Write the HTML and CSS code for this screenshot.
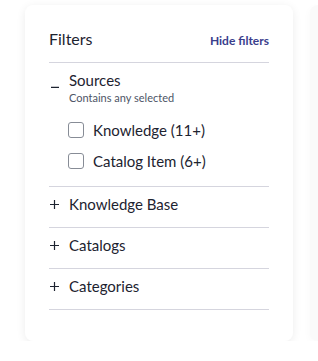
FILE: index.html
```html
<!DOCTYPE html>
<html>

<head>
  <title>Filters</title>
  <link rel="stylesheet" href="styles.css">
</head>

<body>
  <div class="layout">
    <div class="filter-card">
      <div class="filter-header">
        <span class="filter-title">Filters</span>
        <a class="hide-link">Hide filters</a>
      </div>

      <div class="filter-section open">
        <div class="section-head">
          <span class="toggle-icon">
            <svg width="9" height="12" viewBox="0 0 9 12"><path d="M1 11.4h8" stroke="#1d2330" stroke-width="1.3"/></svg>
          </span>
          <div>
            <div class="section-name">Sources</div>
            <div class="section-sub">Contains any selected</div>
          </div>
        </div>
        <ul class="option-list">
          <li class="option-item"><span class="checkbox"></span>Knowledge (11+)</li>
          <li class="option-item"><span class="checkbox"></span>Catalog Item (6+)</li>
        </ul>
      </div>

      <div class="filter-section">
        <div class="section-head">
          <span class="toggle-icon">
            <svg width="9" height="9" viewBox="0 0 9 9"><path d="M0 4.5h9M4.5 0v9" stroke="#1d2330" stroke-width="1.2"/></svg>
          </span>
          <div class="section-name">Knowledge Base</div>
        </div>
      </div>

      <div class="filter-section">
        <div class="section-head">
          <span class="toggle-icon">
            <svg width="9" height="9" viewBox="0 0 9 9"><path d="M0 4.5h9M4.5 0v9" stroke="#1d2330" stroke-width="1.2"/></svg>
          </span>
          <div class="section-name">Catalogs</div>
        </div>
      </div>

      <div class="filter-section">
        <div class="section-head">
          <span class="toggle-icon">
            <svg width="9" height="9" viewBox="0 0 9 9"><path d="M0 4.5h9M4.5 0v9" stroke="#1d2330" stroke-width="1.2"/></svg>
          </span>
          <div class="section-name">Categories</div>
        </div>
      </div>
    </div>

    <div class="result-card"></div>
  </div>
</body>

</html>
```

FILE: styles.css
```css
body {
  margin: 0;
  background-color: #fff;
  font-family: Lato, 'Noto Sans', sans-serif;
  color: #1d2330;
  overflow: hidden;
}

.layout {
  display: flex;
  gap: 17px;
  padding: 5px 0 0 25px;
}

/* Filter panel */
.filter-card {
  flex: 0 0 268px;
  height: 336px;
  box-sizing: border-box;
  padding: 0 24px;
  background-color: #fff;
  border-radius: 8px;
  box-shadow: 0 2px 10px rgba(0, 0, 0, 0.08);
}

/* edge of the next panel */
.result-card {
  flex: 1;
  min-width: 0;
  height: 336px;
  background-color: #fafafa;
  border-radius: 8px 0 0 8px;
  box-shadow: 0 2px 8px rgba(0, 0, 0, 0.03);
}

.filter-header {
  display: flex;
  justify-content: space-between;
  align-items: baseline;
  padding: 24px 0 13px;
  border-bottom: 1px solid #d5d5de;
}

.filter-title {
  font-size: 16px;
  line-height: 20px;
}

.hide-link {
  font-size: 12px;
  font-weight: bold;
  color: #3a3e8c;
  cursor: pointer;
}

/* Sections */
.filter-section {
  padding: 8px 0 14px;
  border-bottom: 1px solid #d5d5de;
}

.filter-section.open {
  padding-bottom: 13px;
}

.section-head {
  display: flex;
  align-items: flex-start;
}

.toggle-icon {
  flex: 0 0 20px;
  padding: 5px 0 0 1px;
  box-sizing: border-box;
  height: 18px;
}

.toggle-icon svg {
  display: block;
}

.section-name {
  font-size: 15px;
  line-height: 18px;
}

.section-sub {
  margin-top: 2px;
  font-size: 11px;
  line-height: 14px;
  color: #4d5566;
}

.option-list {
  list-style-type: none;
  margin: 13px 0 0 19px;
  padding: 0;
  display: flex;
  flex-direction: column;
  gap: 7px;
}

.option-item {
  display: flex;
  align-items: center;
  height: 24px;
  font-size: 15px;
}

.checkbox {
  width: 16px;
  height: 16px;
  box-sizing: border-box;
  border: 1px solid #878c96;
  border-radius: 3px;
  margin-right: 9px;
}
```
